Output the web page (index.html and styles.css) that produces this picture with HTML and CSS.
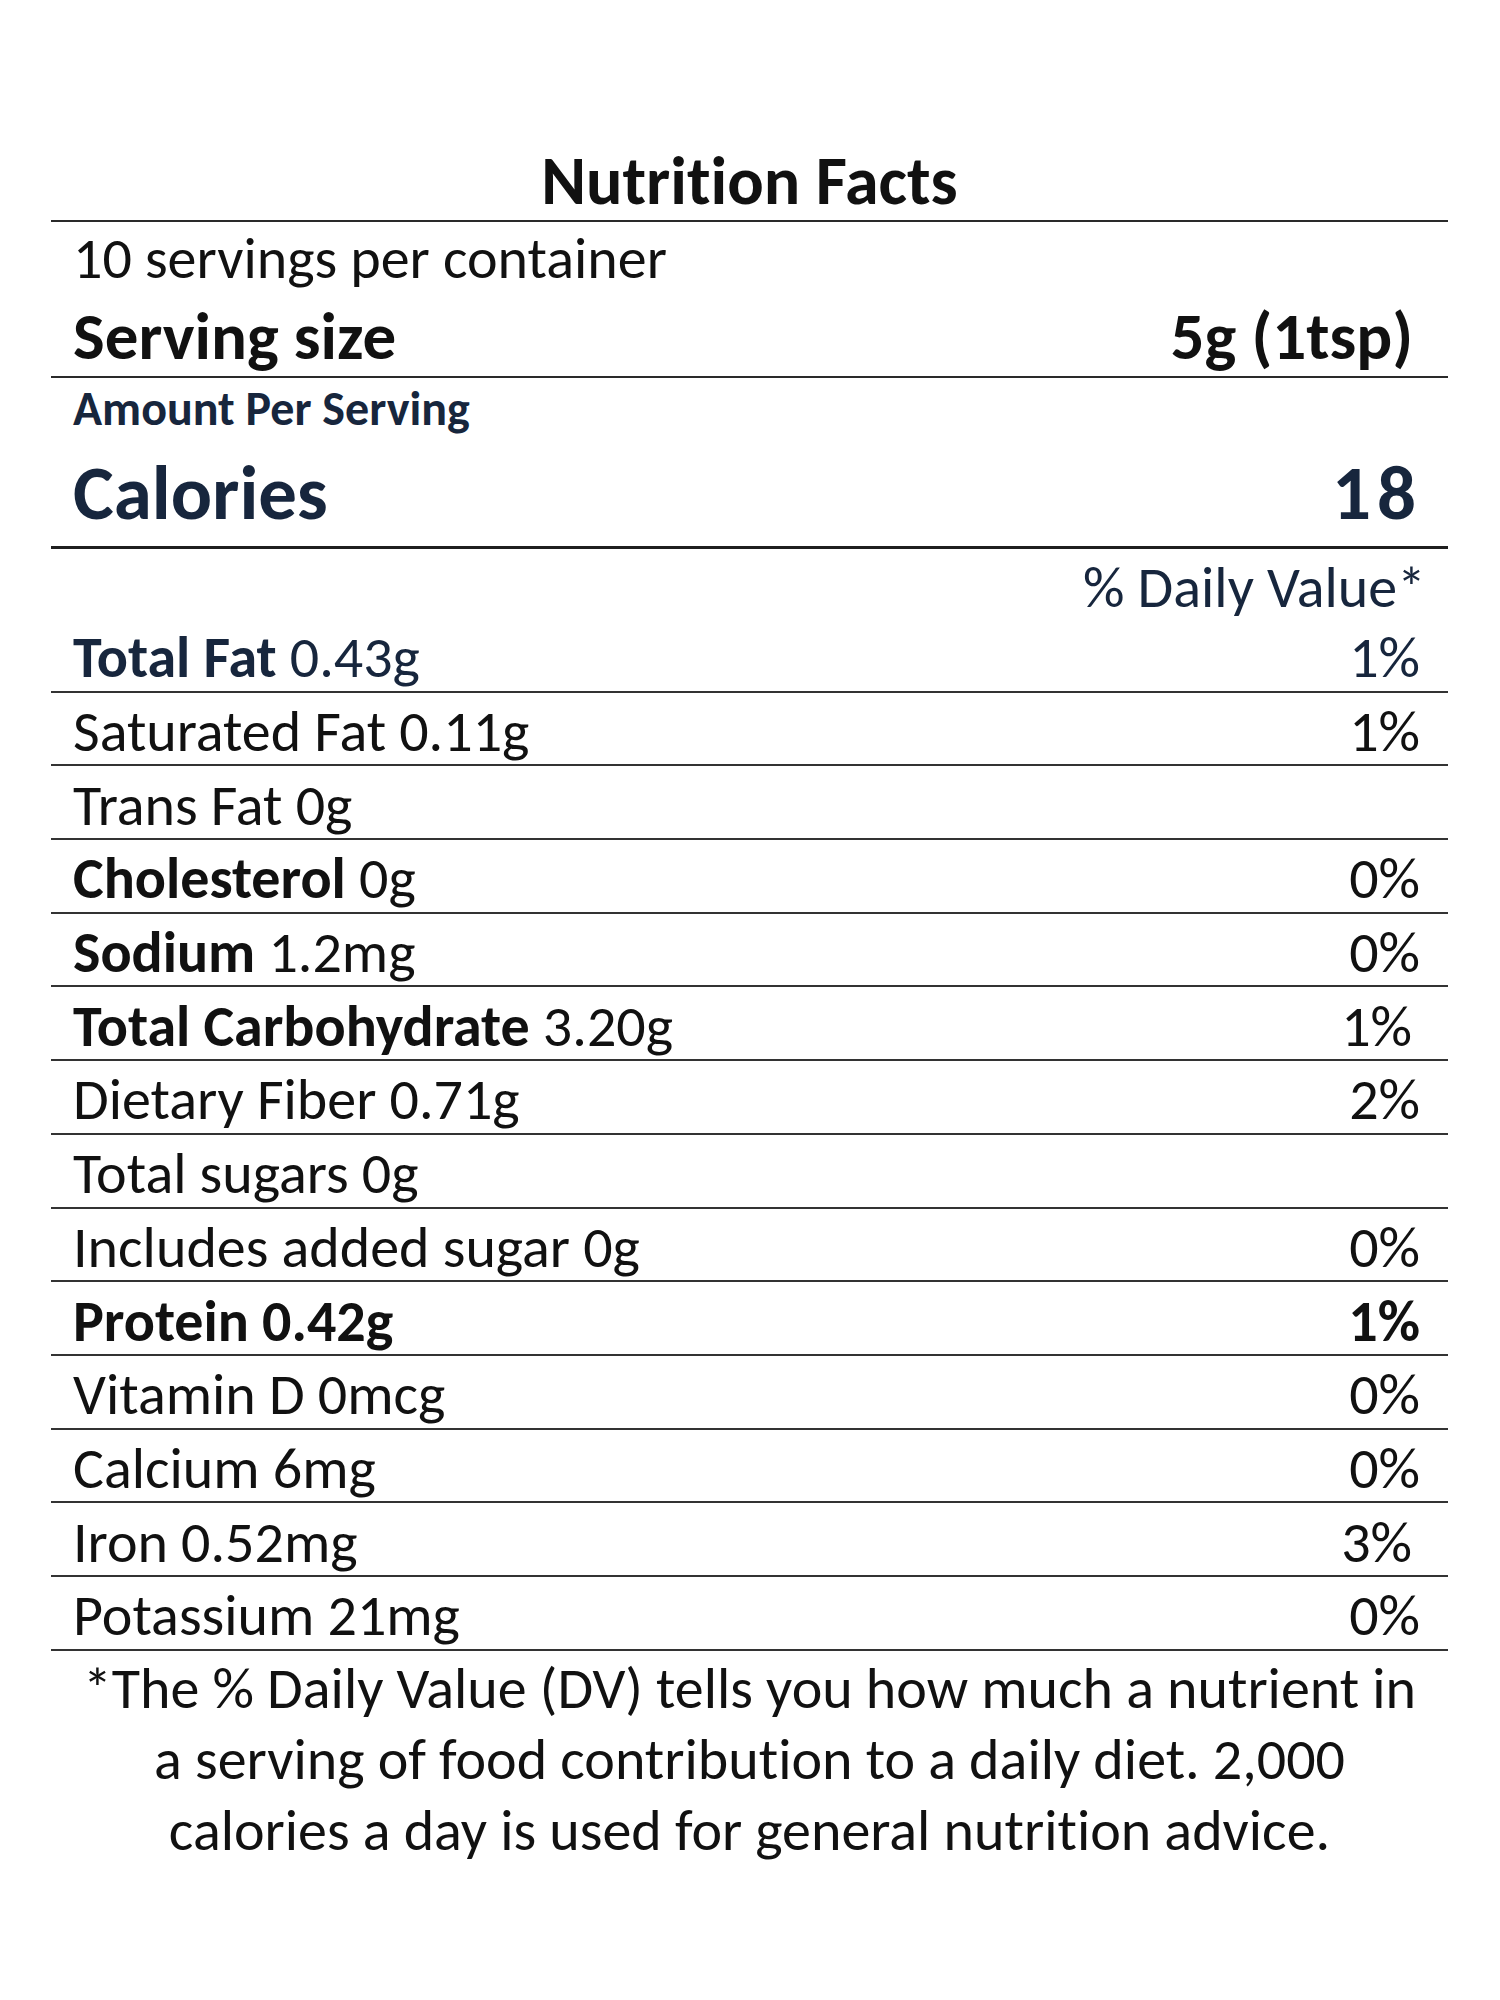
FILE: index.html
```html
<!DOCTYPE html>
<html lang="en">
<head>
<meta charset="utf-8">
<title>Nutrition Facts</title>
<link rel="stylesheet" href="styles.css">
</head>
<body>
<div class="label">
  <h1 class="title">Nutrition Facts</h1>
  <div class="servings">
    <div class="per">10 servings per container</div>
    <div class="size-row"><span>Serving size</span><span>5g (1tsp)</span></div>
  </div>
  <div class="calories-block">
    <div class="amount">Amount Per Serving</div>
    <div class="cal-row"><span>Calories</span><span class="cal-num">18</span></div>
  </div>
  <div class="dv-head">% Daily Value*</div>
  <div class="row navy"><span><b>Total Fat</b> 0.43g</span><span>1%</span></div>
  <div class="row"><span>Saturated Fat 0.11g</span><span>1%</span></div>
  <div class="row"><span>Trans Fat 0g</span><span></span></div>
  <div class="row"><span><b>Cholesterol</b> 0g</span><span>0%</span></div>
  <div class="row"><span><b>Sodium</b> 1.2mg</span><span>0%</span></div>
  <div class="row"><span><b>Total Carbohydrate</b> 3.20g</span><span class="shift">1%</span></div>
  <div class="row"><span>Dietary Fiber 0.71g</span><span>2%</span></div>
  <div class="row"><span>Total sugars 0g</span><span></span></div>
  <div class="row"><span>Includes added sugar 0g</span><span>0%</span></div>
  <div class="row"><span><b>Protein 0.42g</b></span><span><b>1%</b></span></div>
  <div class="row"><span>Vitamin D 0mcg</span><span>0%</span></div>
  <div class="row"><span>Calcium 6mg</span><span>0%</span></div>
  <div class="row"><span>Iron 0.52mg</span><span class="shift">3%</span></div>
  <div class="row"><span>Potassium 21mg</span><span>0%</span></div>
  <p class="note">*The % Daily Value (DV) tells you how much a nutrient in<br>a serving of food contribution to a daily diet. 2,000<br>calories a day is used for general nutrition advice.</p>
</div>
</body>
</html>
```

FILE: styles.css
```css
html, body {
  margin: 0;
  padding: 0;
  background: #ffffff;
}

body {
  font-family: Carlito, Lato, "Noto Sans", sans-serif;
  font-variant-ligatures: none;
  color: #111111;
}

.label {
  width: 1397px;
  margin-left: 51px;
  padding-top: 142px;
}

.title {
  margin: 0;
  font-size: 68px;
  font-weight: 700;
  line-height: 78px;
  text-align: center;
  border-bottom: 2px solid #2a2a2a;
}

.servings {
  border-bottom: 2px solid #2a2a2a;
  padding: 0 35px 0 22px;
}

.per {
  font-size: 58px;
  line-height: 74px;
}

.size-row {
  display: flex;
  justify-content: space-between;
  font-size: 67px;
  font-weight: 700;
  line-height: 80px;
}

.calories-block {
  border-bottom: 3px solid #1f1f1f;
  padding: 0 32px 0 22px;
  color: #17263d;
  font-weight: 700;
}

.amount {
  font-size: 48px;
  line-height: 62px;
}

.cal-row {
  display: flex;
  justify-content: space-between;
  font-size: 77px;
  line-height: 106px;
}

.cal-num {
  letter-spacing: 6px;
  margin-right: -6px;
}

.dv-head {
  text-align: right;
  padding-right: 22px;
  font-size: 58px;
  line-height: 70px;
  padding-top: 4px;
  height: 66px;
  color: #17263d;
}

.row {
  display: flex;
  justify-content: space-between;
  align-items: center;
  box-sizing: border-box;
  height: 73.7px;
  padding: 6px 28px 0 22px;
  border-bottom: 2px solid #333333;
  font-size: 58px;
}

.row b {
  font-weight: 700;
}

.row.navy {
  color: #17263d;
}

.row .shift {
  margin-right: 8px;
}

.note {
  margin: 0;
  padding-top: 2px;
  text-align: center;
  white-space: nowrap;
  font-size: 58px;
  line-height: 71px;
}
```
